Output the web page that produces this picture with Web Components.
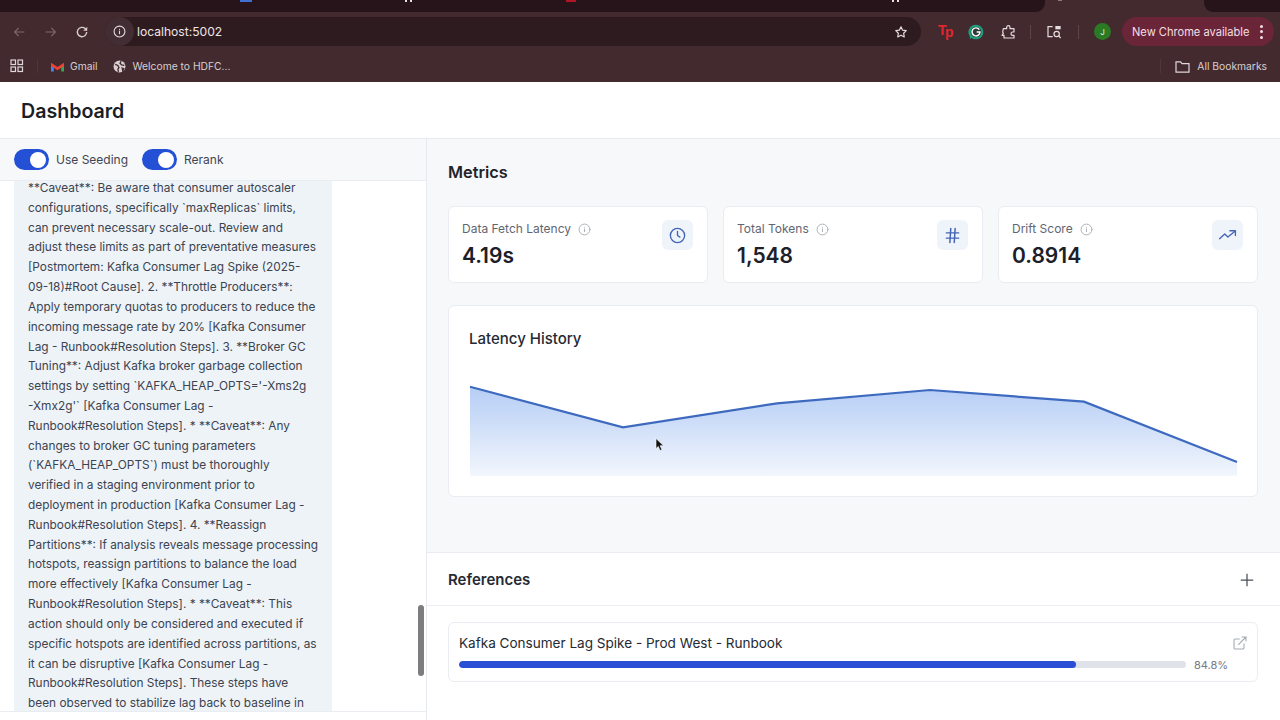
<!DOCTYPE html>
<html>
<head>
<meta charset="utf-8">
<title>Dashboard</title>
<style>
  html, body { margin: 0; height: 100%; overflow: hidden; background: #fff; }
  body { display: flex; flex-direction: column; height: 720px; font-family: Inter, "Liberation Sans", sans-serif; }
</style>
</head>
<body>
<browser-chrome></browser-chrome>
<dash-header>Dashboard</dash-header>
<dash-main>
  <left-panel slot="left"></left-panel>
  <right-panel slot="right"></right-panel>
</dash-main>

<script>
const icons = {
  back: '<path d="M14 6H2M7 1 2 6l5 5"/>',
  clock: '<circle cx="12" cy="12" r="9"/><path d="M12 7v5l3 2"/>',
  hash: '<path d="M5 9h14M5 15h14M10 4 9 20M15 4l-1 16"/>',
  trend: '<path d="m2 16 6.500-6 4 4L21 7"/><path d="M15 6h7v6"/>',
  info: '<circle cx="12" cy="12" r="10"/><path d="M12 16v-5M12 8h.01"/>',
  plus: '<path d="M12 5v14M5 12h14"/>',
  external: '<path d="M18 13v6a2 2 0 0 1-2 2H5a2 2 0 0 1-2-2V8a2 2 0 0 1 2-2h6"/><path d="M15 3h6v6M10 14 21 3"/>'
};

function icon(name, size, color, width) {
  return `<svg width="${size}" height="${size}" viewBox="0 0 24 24" fill="none" stroke="${color}" stroke-width="${width || 2}" stroke-linecap="round" stroke-linejoin="round">${icons[name]}</svg>`;
}

class BrowserChrome extends HTMLElement {
  constructor() {
    super();
    this.attachShadow({ mode: "open" });
    this.shadowRoot.innerHTML = `
      <style>
        :host { display: block; flex: none; height: 82px; background: #422a2f; color: #e6dcdd; font-family: Inter, "Liberation Sans", sans-serif; overflow: hidden; }
        .tabs { height: 12px; display: flex; justify-content: space-between; position: relative; }
        .tabs .l { width: 1045px; background: #27141a; border-bottom-right-radius: 9px; }
        .tabs .r { width: 76px; background: #27141a; border-bottom-left-radius: 9px; }
        .tabs i { position: absolute; top: 0; height: 2px; }
        .toolbar { height: 39px; display: flex; align-items: center; }
        .nav { display: flex; align-items: center; width: 105px; flex: none; }
        .nav .b { display: flex; justify-content: center; }
        .nav .b:nth-child(1) { width: 38px; }
        .nav .b:nth-child(2) { width: 24px; }
        .nav .b:nth-child(3) { width: 40px; }
        .omni { flex: none; width: 816px; height: 29px; border-radius: 15px; background: #2e1b20; display: flex; align-items: center; }
        .omni .circle { width: 29px; height: 29px; border-radius: 50%; background: #422d34; display: flex; align-items: center; justify-content: center; margin-right: 3px; }
        .omni .url { font-size: 12.100px; color: #eee6e6; flex: 1; }
        .omni .star { margin-right: 13px; display: flex; }
        .ext { display: flex; align-items: center; }
        .sep { width: 1px; height: 14px; background: #5d474c; flex: none; }
        .sep.faint { background: #4f363b; }
        .tp { color: #e0272f; font: bold 14px "Liberation Sans", sans-serif; letter-spacing: -1.500px; width: 14px; margin-top: -3px; }
        .tp span { position: relative; top: 2px; }
        .avatar { width: 17px; height: 17px; border-radius: 50%; background: #2c7a24; color: #dfeedd; font-size: 8px; display: flex; align-items: center; justify-content: center; }
        .chip { width: 152px; box-sizing: border-box; height: 29px; border-radius: 15px; background: #6b2539; color: #f3dfe3; font-size: 11.100px; display: flex; align-items: center; justify-content: space-between; padding: 0 11px 0 10px; white-space: nowrap; }
        .dots { display: flex; flex-direction: column; gap: 2.500px; }
        .dots i { width: 3px; height: 3px; border-radius: 50%; background: #f3dfe3; }
        .bookmarks { height: 30px; display: flex; align-items: center; font-size: 10.300px; color: #d9cfd0; padding-right: 13px; }
        .bookmarks span { white-space: nowrap; }
        .mark { display: flex; align-items: center; }
      </style>
      <div class="tabs">
        <div class="l"></div><div class="r"></div>
        <i style="left:240px;width:12px;background:#3f6fd0"></i>
        <i style="left:405px;width:2px;background:#e8e0e0"></i>
        <i style="left:410px;width:2px;background:#e8e0e0"></i>
        <i style="left:566px;width:10px;background:#b01528"></i>
        <i style="left:892px;width:2px;background:#e8e0e0"></i>
        <i style="left:897px;width:2px;background:#e8e0e0"></i>
        <i style="left:1058px;width:4px;height:1px;background:#8c7b7e"></i>
      </div>
      <div class="toolbar">
        <div class="nav">
          <div class="b"><svg width="13" height="12" viewBox="0 0 16 12" fill="none" stroke="#7b696c" stroke-width="1.500">${icons.back}</svg></div>
          <div class="b"><svg width="13" height="12" viewBox="0 0 16 12" fill="none" stroke="#7b696c" stroke-width="1.500" style="transform:scaleX(-1)">${icons.back}</svg></div>
          <div class="b"><svg width="14" height="14" viewBox="0 0 24 24" fill="none" stroke="#d8cdce" stroke-width="2.400"><path d="M20 12a8 8 0 1 1-2.500-5.800L20 8.500"/><path d="M21 3v7h-7" fill="#d8cdce" stroke="none"/></svg></div>
        </div>
        <div class="omni">
          <div class="circle">${icon("info", 13, "#e6dcdd", 2)}</div>
          <div class="url">localhost:5002</div>
          <div class="star"><svg width="14" height="14" viewBox="0 0 24 24" fill="none" stroke="#e6dcdd" stroke-width="2" stroke-linejoin="round"><path d="m12 3 2.800 5.800 6.200.9-4.500 4.400 1.100 6.300L12 17.400l-5.600 3 1.100-6.300L3 9.700l6.200-.9z"/></svg></div>
        </div>
        <div class="ext">
          <div class="tp" style="margin-left:17px">T<span>p</span></div>
          <svg style="margin-left:16px" width="16" height="16" viewBox="0 0 24 24"><path d="M12 1a11 11 0 1 1-7 19.500L3 23l-.5-5A11 11 0 0 1 12 1z" fill="#1f9d7c"/><circle cx="12" cy="12" r="8" fill="#2b3a36"/><path d="M17 8.500A6 6 0 1 0 18 12h-5" fill="none" stroke="#fff" stroke-width="2.200"/></svg>
          <svg style="margin-left:16px" width="16" height="16" viewBox="0 0 24 24" fill="none" stroke="#e6dcdd" stroke-width="1.800" stroke-linejoin="round"><path d="M5 7h5V5a2.500 2.500 0 0 1 5 0v2h6v5h-2a2.500 2.500 0 0 0 0 5h2v4H6v-4H3l2-3-1-2z"/></svg>
          <div class="sep" style="margin-left:14px"></div>
          <svg style="margin-left:15px" width="16" height="16" viewBox="0 0 24 24" fill="none" stroke="#e6dcdd" stroke-width="1.800"><path d="M10 4H3v15h7"/><rect x="14" y="3" width="8" height="5" fill="#e6dcdd" stroke="none"/><circle cx="16" cy="15" r="4"/><path d="m19 18 3 3"/></svg>
          <div class="sep" style="margin-left:16px"></div>
          <div class="avatar" style="margin-left:15px">J</div>
          <div class="chip" style="margin-left:11px">New Chrome available<div class="dots"><i></i><i></i><i></i></div></div>
        </div>
      </div>
      <div class="bookmarks">
        <svg style="margin-left:10px" width="14" height="14" viewBox="0 0 14 14" fill="none" stroke="#e0d6d7" stroke-width="1.200"><rect x="1" y="1" width="4.500" height="4.500"/><rect x="8" y="1" width="4.500" height="4.500"/><rect x="1" y="8" width="4.500" height="4.500"/><rect x="8" y="8" width="4.500" height="4.500"/></svg>
        <div class="sep faint" style="margin-left:13px"></div>
        <div class="mark" style="margin-left:13px">
          <svg width="13" height="11" viewBox="0 0 14 11"><path d="M0 2v9h3V4z" fill="#4285f4"/><path d="M14 2v9h-3V4z" fill="#34a853"/><path d="M0 1.500 7 6l7-4.500V5L7 9.500 0 5z" fill="#ea4335"/></svg>
          <span style="margin-left:6px">Gmail</span>
        </div>
        <div class="mark" style="margin-left:16px">
          <svg width="13" height="13" viewBox="0 0 24 24"><circle cx="12" cy="12" r="11" fill="#d9cfd0"/><path d="M4 8l5 2 2 4-2 3 1 5M15 2l-2 4 3 3 5 1M17 15l3 1-2 4z" stroke="#432b30" stroke-width="2.500" fill="none"/></svg>
          <span style="margin-left:6px">Welcome to HDFC...</span>
        </div>
        <div style="flex:1"></div>
        <div class="sep faint"></div>
        <svg style="margin-left:14px" width="15" height="13" viewBox="0 0 16 14" fill="none" stroke="#e0d6d7" stroke-width="1.300"><path d="M1 2h5l1.500 2H15v9H1z"/></svg>
        <span style="margin-left:7px">All Bookmarks</span>
      </div>
    `;
  }
}

class DashHeader extends HTMLElement {
  constructor() {
    super();
    this.attachShadow({ mode: "open" });
    this.shadowRoot.innerHTML = `
      <style>
        :host { display: flex; align-items: center; flex: none; height: 55px; padding: 1px 0 0 21px; background: #fff; border-bottom: 1px solid #e6e9ee; font-size: 19.600px; font-weight: 600; color: #1a1e26; }
      </style>
      <slot></slot>
    `;
  }
}

class DashMain extends HTMLElement {
  constructor() {
    super();
    this.attachShadow({ mode: "open" });
    this.shadowRoot.innerHTML = `
      <style>
        :host { display: grid; grid-template-columns: 427px 1fr; flex: 1; min-height: 0; overflow: hidden; }
      </style>
      <slot name="left"></slot>
      <slot name="right"></slot>
    `;
  }
}

class ToggleSwitch extends HTMLElement {
  constructor() {
    super();
    this.attachShadow({ mode: "open" });
    this.shadowRoot.innerHTML = `
      <style>
        :host { display: inline-flex; align-items: center; gap: 7px; font-size: 12px; color: #3f4652; }
        .track { width: 35px; height: 21px; border-radius: 11px; background: #2450d6; display: flex; align-items: center; justify-content: flex-end; padding: 0 3px; box-sizing: border-box; }
        .knob { width: 16px; height: 16px; border-radius: 50%; background: #fff; }
      </style>
      <div class="track"><div class="knob"></div></div>
      <slot></slot>
    `;
  }
}

class LeftPanel extends HTMLElement {
  constructor() {
    super();
    this.attachShadow({ mode: "open" });
    const lines = [
      "**Caveat**: Be aware that consumer autoscaler",
      "configurations, specifically `maxReplicas` limits,",
      "can prevent necessary scale-out. Review and",
      "adjust these limits as part of preventative measures",
      "[Postmortem: Kafka Consumer Lag Spike (2025-",
      "09-18)#Root Cause]. 2. **Throttle Producers**:",
      "Apply temporary quotas to producers to reduce the",
      "incoming message rate by 20% [Kafka Consumer",
      "Lag - Runbook#Resolution Steps]. 3. **Broker GC",
      "Tuning**: Adjust Kafka broker garbage collection",
      "settings by setting `KAFKA_HEAP_OPTS='-Xms2g",
      "-Xmx2g'` [Kafka Consumer Lag -",
      "Runbook#Resolution Steps]. * **Caveat**: Any",
      "changes to broker GC tuning parameters",
      "(`KAFKA_HEAP_OPTS`) must be thoroughly",
      "verified in a staging environment prior to",
      "deployment in production [Kafka Consumer Lag -",
      "Runbook#Resolution Steps]. 4. **Reassign",
      "Partitions**: If analysis reveals message processing",
      "hotspots, reassign partitions to balance the load",
      "more effectively [Kafka Consumer Lag -",
      "Runbook#Resolution Steps]. * **Caveat**: This",
      "action should only be considered and executed if",
      "specific hotspots are identified across partitions, as",
      "it can be disruptive [Kafka Consumer Lag -",
      "Runbook#Resolution Steps]. These steps have",
      "been observed to stabilize lag back to baseline in"
    ];
    this.shadowRoot.innerHTML = `
      <style>
        :host { display: flex; flex-direction: column; height: 100%; min-height: 0; background: #fff; border-right: 1px solid #e6e9ee; box-sizing: border-box; position: relative; overflow: hidden; }
        .controls { flex: none; height: 42px; box-sizing: border-box; display: flex; align-items: center; gap: 14px; padding-left: 14px; background: #f6f8fa; border-bottom: 1px solid #e9ecf1; }
        .scroll { flex: 1; min-height: 0; overflow: hidden; padding-left: 14px; }
        .bubble { width: 318px; box-sizing: border-box; background: #eef3f8; padding: 0 4px 0 14px; margin-top: -2px; font-size: 11.850px; line-height: 19.810px; color: #3c4350; height: calc(100% + 2px); overflow: hidden; white-space: nowrap; }
        .bottom { flex: none; height: 8px; background: #fff; border-top: 1px solid #e9ecf1; }
        .thumb { position: absolute; right: 2px; top: 466px; width: 6px; height: 71px; border-radius: 3px; background: #7d7d7d; }
      </style>
      <div class="controls">
        <toggle-switch>Use Seeding</toggle-switch>
        <toggle-switch>Rerank</toggle-switch>
      </div>
      <div class="scroll"><div class="bubble">${lines.map(l => `<div>${l}</div>`).join("")}</div></div>
      <div class="bottom"></div>
      <div class="thumb"></div>
    `;
  }
}

class MetricCard extends HTMLElement {
  connectedCallback() {
    if (!this.shadowRoot) this.attachShadow({ mode: "open" });
    const big = { clock: 19, hash: 21, trend: 19 }[this.getAttribute("icon")];
    this.shadowRoot.innerHTML = `
      <style>
        :host { display: flex; justify-content: space-between; height: 77px; box-sizing: border-box; background: #fff; border: 1px solid #e9ecf0; border-radius: 6px; padding: 13px 14px 0 13px; }
        .label { display: flex; align-items: center; gap: 7px; font-size: 12px; color: #5f6672; line-height: 18px; }
        .value { font-size: 21px; font-weight: 600; color: #1c2029; line-height: 30px; margin-top: 3px; }
        .badge { width: 31px; height: 30px; border-radius: 6px; background: #eff4fb; display: flex; align-items: center; justify-content: center; flex: none; }
        svg { display: block; }
      </style>
      <div>
        <div class="label">${this.getAttribute("label")}${icon("info", 13, "#9aa1ab", 1.500)}</div>
        <div class="value">${this.getAttribute("value")}</div>
      </div>
      <div class="badge">${icon(this.getAttribute("icon"), big, "#4464b4", 1.700)}</div>
    `;
  }
}

class LatencyChart extends HTMLElement {
  constructor() {
    super();
    this.attachShadow({ mode: "open" });
    this.shadowRoot.innerHTML = `
      <style>
        :host { display: block; position: relative; height: 192px; box-sizing: border-box; background: #fff; border: 1px solid #e9ecf0; border-radius: 6px; padding: 21px 20px 0 20px; }
        h3 { margin: 0; font-size: 15px; font-weight: 500; color: #252a33; line-height: 24px; }
        svg.chart { display: block; margin-top: 24px; }
        svg.cursor { position: absolute; left: 206px; top: 132px; }
      </style>
      <h3>Latency History</h3>
      <svg class="chart" width="769" height="105" viewBox="0 0 769 105">
        <defs>
          <linearGradient id="fill" x1="0" y1="0" x2="0" y2="1">
            <stop offset="0" stop-color="#b5cdf5"/>
            <stop offset="1" stop-color="#f2f6fd"/>
          </linearGradient>
        </defs>
        <path d="M1 11.700 154 52.300 308 28.300 461 15 615 26.700 768 87V100.700H1Z" fill="url(#fill)"/>
        <path d="M1 11.700 154 52.300 308 28.300 461 15 615 26.700 768 87" fill="none" stroke="#3d6abf" stroke-width="2.200"/>
      </svg>
      <svg class="cursor" width="9" height="14" viewBox="0 0 9 14"><path d="M1 .5V10.500l2.300-2.100 1.700 4.100 1.900-.8-1.700-4H8.500z" fill="#111" stroke="#fff" stroke-width=".6"/></svg>
    `;
  }
}

class ReferenceItem extends HTMLElement {
  constructor() {
    super();
    this.attachShadow({ mode: "open" });
    this.shadowRoot.innerHTML = `
      <style>
        :host { display: block; height: 60px; box-sizing: border-box; background: #fff; border: 1px solid #e9ecf0; border-radius: 6px; padding: 10px 9px 0 10px; }
        .top { display: flex; justify-content: space-between; align-items: center; height: 20px; font-size: 13.550px; font-weight: 400; color: #252a33; }
        .row { display: flex; align-items: center; height: 7px; margin-top: 8px; font-size: 11px; color: #747a84; }
        .bar { width: 727px; height: 7px; border-radius: 4px; background: #dfe3e9; flex: none; overflow: hidden; }
        .fill { width: 617px; height: 100%; border-radius: 4px; background: #2a4fd4; }
        .pct { margin-left: 8px; }
        svg { display: block; }
      </style>
      <div class="top"><slot></slot>${icon("external", 16, "#a4a9b1", 1.600)}</div>
      <div class="row"><div class="bar"><div class="fill"></div></div><div class="pct">84.8%</div></div>
    `;
  }
}

class RightPanel extends HTMLElement {
  constructor() {
    super();
    this.attachShadow({ mode: "open" });
    this.shadowRoot.innerHTML = `
      <style>
        :host { display: flex; flex-direction: column; height: 100%; min-width: 0; overflow: hidden; background: #fff; }
        .metrics { flex: none; height: 414px; box-sizing: border-box; background: #f6f8fa; padding: 21px 22px 0 21px; border-bottom: 1px solid #e9ecf1; }
        h2 { margin: 0; font-size: 16.300px; font-weight: 600; color: #1f232b; line-height: 25px; }
        .cards { display: grid; grid-template-columns: repeat(3, 1fr); gap: 15px; margin-top: 21px; }
        latency-chart { margin-top: 22px; }
        .refhead { flex: none; height: 53px; box-sizing: border-box; display: flex; align-items: center; justify-content: space-between; padding: 1px 23px 0 21px; border-bottom: 1px solid #eceef3; font-size: 15px; font-weight: 600; color: #252a33; }
        .refs { padding: 16px 22px 0 21px; }
        svg { display: block; }
      </style>
      <div class="metrics">
        <h2>Metrics</h2>
        <div class="cards">
          <metric-card label="Data Fetch Latency" value="4.19s" icon="clock"></metric-card>
          <metric-card label="Total Tokens" value="1,548" icon="hash"></metric-card>
          <metric-card label="Drift Score" value="0.8914" icon="trend"></metric-card>
        </div>
        <latency-chart></latency-chart>
      </div>
      <div class="refhead">References${icon("plus", 20, "#4a4f58", 1.500)}</div>
      <div class="refs"><reference-item>Kafka Consumer Lag Spike - Prod West - Runbook</reference-item></div>
    `;
  }
}

customElements.define("browser-chrome", BrowserChrome);
customElements.define("dash-header", DashHeader);
customElements.define("dash-main", DashMain);
customElements.define("toggle-switch", ToggleSwitch);
customElements.define("left-panel", LeftPanel);
customElements.define("metric-card", MetricCard);
customElements.define("latency-chart", LatencyChart);
customElements.define("reference-item", ReferenceItem);
customElements.define("right-panel", RightPanel);
</script>
</body>
</html>
